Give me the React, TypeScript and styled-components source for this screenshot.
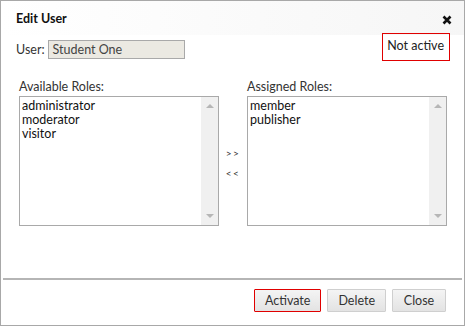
import React from 'react';
import styled, { createGlobalStyle } from 'styled-components';

const GlobalStyle = createGlobalStyle`
  *, *::before, *::after { box-sizing: border-box; }
  body {
    margin: 0;
    background: #fff;
    font-family: Lato, "Open Sans", sans-serif;
    font-size: 12px;
    color: #222;
  }
`;

const Dialog = styled.div`
  width: 465px;
  height: 326px;
  border: 1px solid #a8a8a8;
  background: #fff;
  display: flex;
  flex-direction: column;
`;

const Header = styled.div`
  height: 34px;
  flex: none;
  display: flex;
  align-items: center;
  justify-content: space-between;
  padding: 0 12px 0 15px;
  background: linear-gradient(to right, #ffffff, #f6f6f6);
`;

const Title = styled.span`
  font-weight: 700;
  font-size: 12.5px;
  color: #111;
`;

const CloseIcon = styled.svg`
  width: 10px;
  height: 10px;
  margin-top: 3px;
`;

const Body = styled.div`
  flex: 1;
  padding: 0 17px 0 15px;
`;

const TopRow = styled.div`
  display: flex;
  justify-content: space-between;
  align-items: flex-start;
`;

const UserField = styled.div`
  display: flex;
  align-items: center;
  gap: 3px;
  margin-top: 5px;
`;

const Label = styled.span`
  color: #333;
  font-size: 12.5px;
`;

const ReadOnlyInput = styled.div`
  width: 137px;
  height: 19px;
  line-height: 17px;
  padding: 0 4px;
  background: #ebe9e2;
  border: 1px solid #a9a9a9;
  color: #444;
  font-size: 12.5px;
`;

const StatusBadge = styled.div`
  margin-top: -2px;
  margin-right: -3px;
  border: 1px solid #e00000;
  height: 28px;
  line-height: 24px;
  padding: 0 5px 0 4px;
  color: #222;
  font-size: 12.5px;
`;

const Columns = styled.div`
  display: flex;
  align-items: flex-start;
  margin-top: 18px;
  padding-left: 3px;
`;

const RoleColumn = styled.div`
  display: flex;
  flex-direction: column;
  gap: 2px;
`;

const ListBox = styled.div`
  width: 200px;
  height: 130px;
  border: 1px solid #a9a9a9;
  display: flex;
`;

const Items = styled.div`
  flex: 1;
  padding: 2px 2px 0;
  line-height: 14px;
  font-size: 12.5px;
  color: #111;
`;

const ScrollTrack = styled.div`
  width: 17px;
  background: #f0f0f0;
  display: flex;
  flex-direction: column;
  justify-content: space-between;
  align-items: center;
  padding: 7px 0;
`;

const Arrow = styled.div<{ $up?: boolean }>`
  width: 0;
  height: 0;
  border-left: 4px solid transparent;
  border-right: 4px solid transparent;
  ${p => (p.$up ? 'border-bottom: 4px solid #b6b6b6;' : 'border-top: 4px solid #b6b6b6;')}
`;

const Movers = styled.div`
  width: 30px;
  display: flex;
  flex-direction: column;
  align-items: center;
  gap: 8px;
  margin-top: 68px;
  font-size: 10px;
  letter-spacing: 1.5px;
  color: #333;
`;

const Footer = styled.div`
  flex: none;
  margin: 0 2px;
  border-top: 2px solid #b5b5b5;
  height: 47px;
  display: flex;
  justify-content: flex-end;
  align-items: flex-start;
  gap: 6px;
  padding: 9px 16px 0 0;
`;

const Button = styled.button<{ $flagged?: boolean }>`
  height: 23px;
  padding: 0 10px;
  min-width: 54px;
  font-family: inherit;
  font-size: 12.5px;
  color: #333;
  background: linear-gradient(#f4f4f4, #e3e3e3);
  border: 1px solid ${p => (p.$flagged ? '#e00000' : '#cfcfcf')};
  border-radius: 1px;
`;

const RoleList = ({ label, items }: { label: string; items: string[] }) => (
  <RoleColumn>
    <Label>{label}</Label>
    <ListBox>
      <Items>
        {items.map(i => (
          <div key={i}>{i}</div>
        ))}
      </Items>
      <ScrollTrack>
        <Arrow $up />
        <Arrow />
      </ScrollTrack>
    </ListBox>
  </RoleColumn>
);

export default function App() {
  return (
    <>
      <GlobalStyle />
      <Dialog>
        <Header>
          <Title>Edit User</Title>
          <CloseIcon viewBox="0 0 10 10">
            <path d="M1.5 1.5 L8.5 8.5 M8.5 1.5 L1.5 8.5" stroke="#111" strokeWidth="2.6" />
          </CloseIcon>
        </Header>
        <Body>
          <TopRow>
            <UserField>
              <Label>User:</Label>
              <ReadOnlyInput>Student One</ReadOnlyInput>
            </UserField>
            <StatusBadge>Not active</StatusBadge>
          </TopRow>
          <Columns>
            <RoleList label="Available Roles:" items={['administrator', 'moderator', 'visitor']} />
            <Movers>
              <span>&gt;&gt;</span>
              <span>&lt;&lt;</span>
            </Movers>
            <RoleList label="Assigned Roles:" items={['member', 'publisher']} />
          </Columns>
        </Body>
        <Footer>
          <Button $flagged>Activate</Button>
          <Button>Delete</Button>
          <Button>Close</Button>
        </Footer>
      </Dialog>
    </>
  );
}
